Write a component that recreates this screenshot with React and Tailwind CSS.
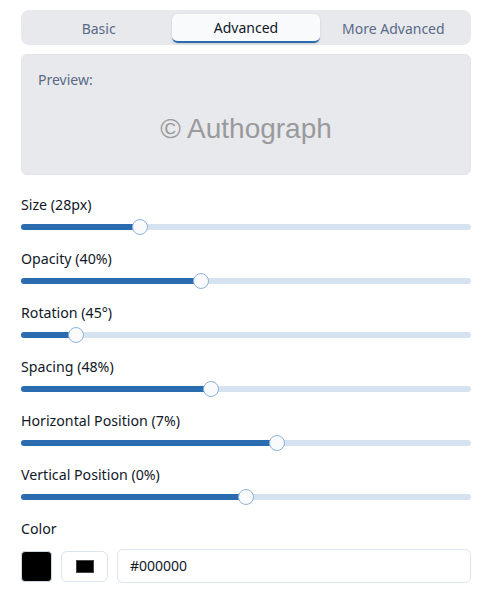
import React, { useState } from "react";

const tabs = ["Basic", "Advanced", "More Advanced"];

const sliders = [
  { label: "Size (28px)", value: 0.256 },
  { label: "Opacity (40%)", value: 0.396 },
  { label: "Rotation (45°)", value: 0.108 },
  { label: "Spacing (48%)", value: 0.419 },
  { label: "Horizontal Position (7%)", value: 0.571 },
  { label: "Vertical Position (0%)", value: 0.5 },
];

function Slider({ label, value }) {
  // thumb is 16px, so the usable track is 450 - 16
  const pos = 8 + value * 434;
  return (
    <div className="mb-[14px]">
      <div className="h-5 text-[14.2px] leading-5 text-[#111827]">{label}</div>
      <div className="relative mt-1 h-4">
        <div className="absolute left-0 right-0 top-[5px] h-[6px] rounded-full bg-[#d5e2f0]" />
        <div
          className="absolute left-0 top-[5px] h-[6px] rounded-full bg-[#2b6cb0]"
          style={{ width: pos }}
        />
        <div
          className="absolute top-0 h-4 w-4 rounded-full border border-[#8fb2da] bg-[#f8fafc]"
          style={{ left: pos - 8 }}
        />
      </div>
    </div>
  );
}

export default function App() {
  const [active, setActive] = useState(1);

  return (
    <div className="min-h-[599px] bg-white pt-[10px] font-['Noto_Sans',sans-serif]">
      <div className="mx-[21px] w-[450px]">
        {/* Tabs */}
        <div className="flex h-[35px] items-start rounded-lg bg-[#e8e9ed] px-1 pt-1">
          {tabs.map((t, i) => (
            <button
              key={t}
              onClick={() => setActive(i)}
              className={
                i === active
                  ? "h-[29px] flex-1 rounded-md border-b-2 border-[#2b6cb0] bg-[#f8fafc] text-sm text-[#111827] shadow-sm"
                  : "h-[29px] flex-1 pt-[1px] text-sm text-[#5a6a85]"
              }
            >
              {t}
            </button>
          ))}
        </div>

        {/* Preview */}
        <div className="mt-[9px] h-[121px] rounded-md border border-[#e2e4e9] bg-[#e8e9ed] px-4 pt-[15px]">
          <div className="text-sm leading-5 text-[#5a6a85]">Preview:</div>
          <div className="mt-[23px] text-center font-['Liberation_Sans',Arial,sans-serif] text-[28px] leading-8 text-[#9a9a9c]">
            © Authograph
          </div>
        </div>

        {/* Sliders */}
        <div className="mt-5">
          {sliders.map((s) => (
            <Slider key={s.label} label={s.label} value={s.value} />
          ))}
        </div>

        {/* Color */}
        <div className="h-5 text-[14.2px] leading-5 text-[#111827]">Color</div>
        <div className="mt-[10px] flex items-center">
          <div className="h-[31px] w-[31px] rounded-[4px] border border-[#d0d7e2] bg-black" />
          <div className="ml-[9px] flex h-[31px] w-[47px] items-center justify-center rounded-md border border-[#dbe4ef] bg-white">
            <div className="h-[13px] w-[18px] border border-[#444] bg-black" />
          </div>
          <div className="ml-[9px] flex h-[34px] flex-1 items-center rounded-md border border-[#dbe4ef] bg-white px-3 text-sm text-[#111827]">
            #000000
          </div>
        </div>
      </div>
    </div>
  );
}
